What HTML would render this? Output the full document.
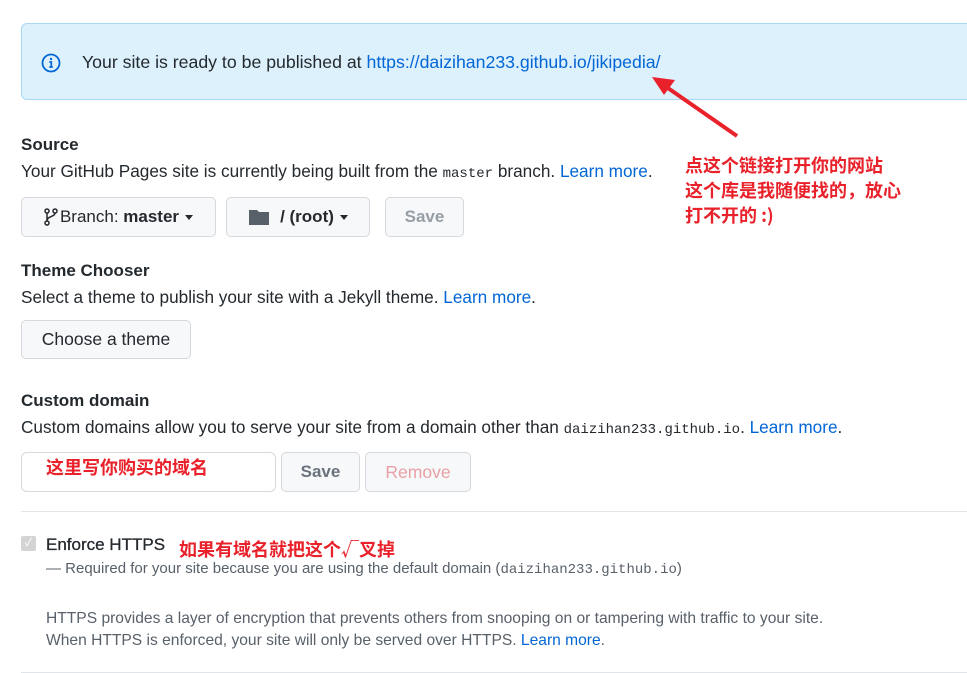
<!DOCTYPE html>
<html><head><meta charset="utf-8"><style>
body{margin:0;width:967px;height:673px;overflow:hidden;background:#fff;font-family:"Liberation Sans","Noto Sans CJK SC",sans-serif;color:#24292e;position:relative}
.a{position:absolute;white-space:nowrap}
.banner{position:absolute;left:21px;top:23px;width:960px;height:77px;box-sizing:border-box;background:#dcf1fc;border:1px solid #a7d8f7;border-radius:6px}
.h{font-size:17px;font-weight:bold}
.t{font-size:17.2px}
a{color:#0366d6;text-decoration:none}
code{font-family:"Liberation Mono",monospace;font-size:14px}
.btn{position:absolute;box-sizing:border-box;background:#f6f8fa;border:1px solid #d5d8dc;border-radius:5px;font-size:17px;font-weight:bold;display:flex;align-items:center;justify-content:center}
.red{color:#e8212a;font-weight:bold;font-family:"Noto Sans CJK SC",sans-serif}
.caret{display:inline-block;border-left:4px solid transparent;border-right:4px solid transparent;border-top:5px solid #24292e;margin-left:6px;vertical-align:middle}
.gray{color:#586069}
</style></head><body>
<div class="banner"></div>
<svg class="a" style="left:41px;top:53px" width="20" height="20" viewBox="0 0 20 20"><circle cx="10" cy="10" r="8.5" fill="none" stroke="#0366d6" stroke-width="1.8"/><circle cx="10" cy="6" r="1.2" fill="#0366d6"/><path d="M8.3 9h2v5M8.3 14h3.5" stroke="#0366d6" stroke-width="1.7" fill="none"/></svg>
<div class="a t" style="left:82px;top:52px;font-size:17.7px">Your site is ready to be published at <a>https://daizihan233.github.io/jikipedia/</a></div>
<svg class="a" style="left:0;top:0" width="967" height="673"><path d="M737 136L665 86" stroke="#e8212a" stroke-width="4"/><path d="M652 77L675 80L664 95Z" fill="#e8212a"/></svg>
<div class="a red" style="left:685px;top:153px;font-size:18px;line-height:25px">点这个链接打开你的网站<br>这个库是我随便找的，放心<br>打不开的 :)</div>

<div class="a h" style="left:21px;top:135px">Source</div>
<div class="a t" style="left:21px;top:161px">Your GitHub Pages site is currently being built from the <code>master</code> branch. <a>Learn more</a>.</div>
<div class="btn" style="left:21px;top:197px;width:195px;height:40px"><svg width="14" height="18" viewBox="0 0 14 18"><circle cx="3" cy="3" r="2" fill="none" stroke="#24292e" stroke-width="1.5"/><circle cx="3" cy="15" r="2" fill="none" stroke="#24292e" stroke-width="1.5"/><circle cx="11" cy="3" r="2" fill="none" stroke="#24292e" stroke-width="1.5"/><path d="M3 5v8M11 5c0 4-8 3-8 8" stroke="#24292e" stroke-width="1.5" fill="none"/></svg><span style="font-weight:normal;margin-left:2px">Branch:</span>&nbsp;master<span class="caret"></span></div>
<div class="btn" style="left:226px;top:197px;width:144px;height:40px"><svg width="22" height="18" viewBox="0 0 22 18" style="margin-right:10px"><path d="M1 2h8l2 2h10v13H1z" fill="#586069"/></svg>/ (root)<span class="caret"></span></div>
<div class="btn" style="left:385px;top:197px;width:79px;height:40px;color:#959da5">Save</div>

<div class="a h" style="left:21px;top:261px">Theme Chooser</div>
<div class="a t" style="left:21px;top:287px">Select a theme to publish your site with a Jekyll theme. <a>Learn more</a>.</div>
<div class="btn" style="left:21px;top:320px;width:170px;height:39px;font-weight:normal;color:#24292e;font-size:17.5px">Choose a theme</div>

<div class="a h" style="left:21px;top:391px">Custom domain</div>
<div class="a t" style="left:21px;top:417px">Custom domains allow you to serve your site from a domain other than <code>daizihan233.github.io</code>. <a>Learn more</a>.</div>
<div class="a" style="left:21px;top:452px;width:255px;height:40px;box-sizing:border-box;border:1px solid #d5d8dc;border-radius:6px"></div>
<div class="a red" style="left:46px;top:454px;font-size:18px">这里写你购买的域名</div>
<div class="btn" style="left:281px;top:452px;width:79px;height:40px;color:#6a737d">Save</div>
<div class="btn" style="left:365px;top:452px;width:106px;height:40px;color:#e9a0a4;font-weight:normal;font-size:17.5px">Remove</div>
<div class="a" style="left:21px;top:511px;width:946px;height:1px;background:#e1e4e8"></div>

<div class="a" style="left:21px;top:536px;width:15px;height:15px;background:#d4d4d4;border-radius:2px;color:#fff;font-size:11px;text-align:center;line-height:15px">✓</div>
<div class="a h" style="left:46px;top:535px;font-weight:normal;-webkit-text-stroke:0.3px #24292e">Enforce HTTPS</div>
<div class="a red" style="left:179px;top:536px;font-size:18px">如果有域名就把这个√叉掉</div>
<div class="a gray" style="left:46px;top:560px;font-size:15px">— Required for your site because you are using the default domain (<code>daizihan233.github.io</code>)</div>
<div class="a gray" style="left:46px;top:608px;font-size:15.6px;line-height:22px">HTTPS provides a layer of encryption that prevents others from snooping on or tampering with traffic to your site.<br>When HTTPS is enforced, your site will only be served over HTTPS. <a>Learn more</a>.</div>
<div class="a" style="left:21px;top:672px;width:946px;height:1px;background:#e1e4e8"></div>
</body></html>
